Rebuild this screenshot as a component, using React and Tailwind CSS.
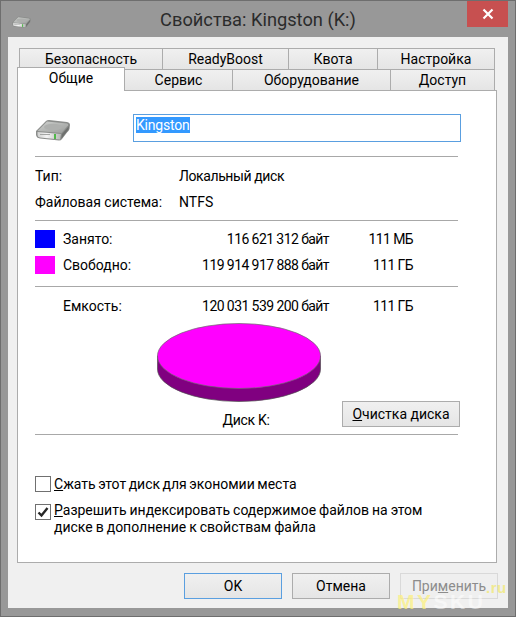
import React from 'react';

const DriveIcon = ({ id, className }) => (
    <svg viewBox="0 0 36 22" className={className}>
        <defs>
            <linearGradient id={`${id}Top`} x1="0" y1="0" x2="1" y2="1">
                <stop offset="0" stopColor="#cfd1cf" />
                <stop offset="1" stopColor="#9a9c9a" />
            </linearGradient>
            <linearGradient id={`${id}Front`} x1="0" y1="0" x2="1" y2="0">
                <stop offset="0" stopColor="#cfd0cf" />
                <stop offset="0.4" stopColor="#f4f4f4" />
                <stop offset="1" stopColor="#b5b7b5" />
            </linearGradient>
        </defs>
        {/* body outline */}
        <path d="M1 12 L11 2 Q12 1 14 1 L32 3 Q35 3.5 35 6 L34.5 10 Q34 11.5 32 13.5 L27 20 Q26 21.5 24 21.5 L5 19.5 Q1.5 19 1 16 Z" fill="#8b8d8b" />
        {/* top plate */}
        <path d="M2.5 12 L12 2.5 L32 4.5 Q33.5 5 33 6.5 L26.5 14 Z" fill={`url(#${id}Top)`} />
        <ellipse cx="18" cy="8" rx="9" ry="3.2" fill="#aeb0ae" />
        {/* front */}
        <path d="M2.5 13 L26 15 L25 20.5 L5 18.5 Q2.5 18 2.5 16 Z" fill={`url(#${id}Front)`} />
        {/* side */}
        <path d="M27 15 L34 7 L33.5 10.5 L26.2 20 Z" fill="#6e706e" />
        <rect x="19" y="15" width="2" height="5" fill="#4fb848" />
        <rect x="5" y="15" width="10" height="1" fill="#a3a5a3" />
    </svg>
);

const Tab = ({ width, children }) => (
    <div className={`${width} h-[21px] -ml-px first:ml-0 flex items-center justify-center border border-b-0 border-[#acacac] bg-gradient-to-b from-[#f0f0f0] to-[#e5e5e5] text-black`}>
        {children}
    </div>
);

const Divider = ({ className }) => <div className={`h-px w-[423px] bg-[#a8a8a8] ${className}`}></div>;

const StatRow = ({ color, label, bytes, size, className }) => (
    <div className={`flex h-[18px] items-center ${className}`}>
        <div className={`w-5 h-[18px] ${color}`}></div>
        <span className="ml-2 w-[120px]">{label}</span>
        <span className="w-[146px] text-right tracking-[-0.58px]">{bytes}</span>
        <span className="w-[84px] text-right tracking-[-0.6px]">{size}</span>
    </div>
);

const Checkbox = ({ checked }) => (
    <div className="w-4 h-4 shrink-0 border border-[#707070] bg-white flex items-center justify-center">
        {checked && (
            <svg viewBox="0 0 14 14" className="w-[14px] h-[14px]">
                <path d="M2.5 7.5 L5.5 10.5 L11.5 3" fill="none" stroke="#262626" strokeWidth="2.4" />
            </svg>
        )}
    </div>
);

const DialogButton = ({ className, children }) => (
    <button className={`w-[98px] h-[26px] border flex items-center justify-center ${className}`}>
        {children}
    </button>
);

const App = () => {
    return (
        <div className="relative w-[516px] h-[617px] overflow-hidden bg-[#989898] border border-[#6e6e6e] font-['Roboto',sans-serif] text-[14px] text-black">
            {/* title bar */}
            <div className="relative h-[36px] flex items-center justify-center pt-[2px]">
                <DriveIcon id="small" className="absolute left-[10px] top-[15px] w-[21px] h-[12px]" />
                <span className="text-[18.25px] text-[#2b2b2b]">Свойства: Kingston (K:)</span>
                <div className="absolute right-[7px] top-0 w-[41px] h-[26px] bg-[#c75050] flex items-center justify-center">
                    <svg viewBox="0 0 12 12" className="w-3 h-3">
                        <path d="M1.5 1.5 L10.5 10.5 M10.5 1.5 L1.5 10.5" stroke="white" strokeWidth="2.2" />
                    </svg>
                </div>
            </div>

            {/* client area */}
            <div className="w-[500px] h-[571px] ml-[7px] bg-[#f0f0f0] pt-[11px]">
                <div className="ml-[11px] flex">
                    <Tab width="w-[144px]">Безопасность</Tab>
                    <Tab width="w-[127px]">ReadyBoost</Tab>
                    <Tab width="w-[90px]">Квота</Tab>
                    <Tab width="w-[118px]">Настройка</Tab>
                </div>
                <div className="ml-[9px] flex items-end h-[21px]">
                    <div className="relative z-10 w-[108px] h-[24px] -mb-px border border-b-0 border-[#acacac] bg-white flex items-center justify-center pb-[3px]">Общие</div>
                    <Tab width="w-[109px]">Сервис</Tab>
                    <Tab width="w-[159px]">Оборудование</Tab>
                    <Tab width="w-[105px]">Доступ</Tab>
                </div>

                <div className="ml-[9px] w-[480px] h-[473px] border border-[#acacac] bg-white pl-[17px] pt-[23px]">
                    <div className="flex items-center">
                        <DriveIcon id="big" className="w-[36px] h-[22px] mt-[4px]" />
                        <div className="ml-[62px] w-[328px] h-[28px] border border-[#5a9fe0] flex items-start pl-[2px] pt-[2px]">
                            <span className="bg-[#3399ff] text-white h-[16px] leading-[16px] tracking-[-0.2px]">Kingston</span>
                        </div>
                    </div>
                    <Divider className="mt-[14px]" />

                    <div className="flex h-[20px] items-center mt-[9px]">
                        <span className="w-[144px]">Тип:</span>
                        <span className="tracking-[-0.4px]">Локальный диск</span>
                    </div>
                    <div className="flex h-[20px] items-center mt-[6px]">
                        <span className="w-[144px]">Файловая система:</span>
                        <span>NTFS</span>
                    </div>
                    <Divider className="mt-[8px]" />

                    <StatRow className="mt-[9px]" color="bg-[#0000ff]" label="Занято:" bytes="116 621 312 байт" size="111 МБ" />
                    <StatRow className="mt-[8px]" color="bg-[#ff00ff]" label="Свободно:" bytes="119 914 917 888 байт" size="111 ГБ" />
                    <Divider className="mt-[12px]" />

                    <div className="flex h-[20px] items-center mt-[9px] pl-[28px]">
                        <span className="w-[120px]">Емкость:</span>
                        <span className="w-[146px] text-right tracking-[-0.58px]">120 031 539 200 байт</span>
                        <span className="w-[84px] text-right tracking-[-0.6px]">111 ГБ</span>
                    </div>

                    <div className="flex items-end mt-[7px] h-[107px]">
                        <div className="ml-[122px] w-[164px]">
                            <svg viewBox="0 0 164 80" className="w-[164px] h-[80px]">
                                <path d="M0.5 33 V46 A81.5 32.5 0 0 0 163.5 46 V33 Z" fill="#800080" stroke="#4d4d4d" strokeWidth="0.7" />
                                <ellipse cx="82" cy="33" rx="81.5" ry="32.5" fill="#ff00ff" stroke="#6b6b6b" strokeWidth="0.7" />
                            </svg>
                            <div className="mt-[7px] h-[20px] flex items-center justify-center pl-[14px] tracking-[-0.3px]">Диск K:</div>
                        </div>
                        <button className="ml-[21px] mb-[3px] w-[118px] h-[26px] border border-[#acacac] bg-gradient-to-b from-[#f0f0f0] to-[#e5e5e5] flex items-center justify-center">
                            <span><u>О</u>чистка диска</span>
                        </button>
                    </div>
                    <Divider className="mt-[4px]" />

                    <div className="flex items-center h-4 mt-[41px] gap-[3px]">
                        <Checkbox />
                        <span className="[word-spacing:-1px]"><u>С</u>жать этот диск для экономии места</span>
                    </div>
                    <div className="flex items-start mt-[12px] gap-[3px]">
                        <Checkbox checked />
                        <span className="leading-[17px] -mt-[2px] [word-spacing:-0.5px]">
                            <u>Р</u>азрешить индексировать содержимое файлов на этом<br />
                            диске в дополнение к свойствам файла
                        </span>
                    </div>
                </div>

                <div className="flex justify-end gap-[10px] mt-[10px] pr-[10px]">
                    <DialogButton className="border-[#5a9fe0] bg-gradient-to-b from-[#f0f0f0] to-[#e5e5e5]">OK</DialogButton>
                    <DialogButton className="border-[#acacac] bg-gradient-to-b from-[#f0f0f0] to-[#e5e5e5]">Отмена</DialogButton>
                    <DialogButton className="border-[#d9d9d9] bg-[#efefef] text-[#8c8c8c]">
                        <span>При<u>м</u>енить</span>
                    </DialogButton>
                </div>
            </div>

            {/* watermark */}
            <div className="absolute left-[396px] top-[589px] text-[21px] leading-[24px] font-bold tracking-[2.5px] font-['Liberation_Sans',sans-serif]">
                <span className="text-[#fdf07a] opacity-70">MY</span>
                <span className="text-white opacity-50">SKU</span>
            </div>
            <div className="absolute left-[485px] top-[579px] text-[15px] leading-[16px] font-bold tracking-[0.5px] text-[#f2e96a] opacity-70 font-['Liberation_Sans',sans-serif]">.ru</div>
        </div>
    );
};

export default App;
